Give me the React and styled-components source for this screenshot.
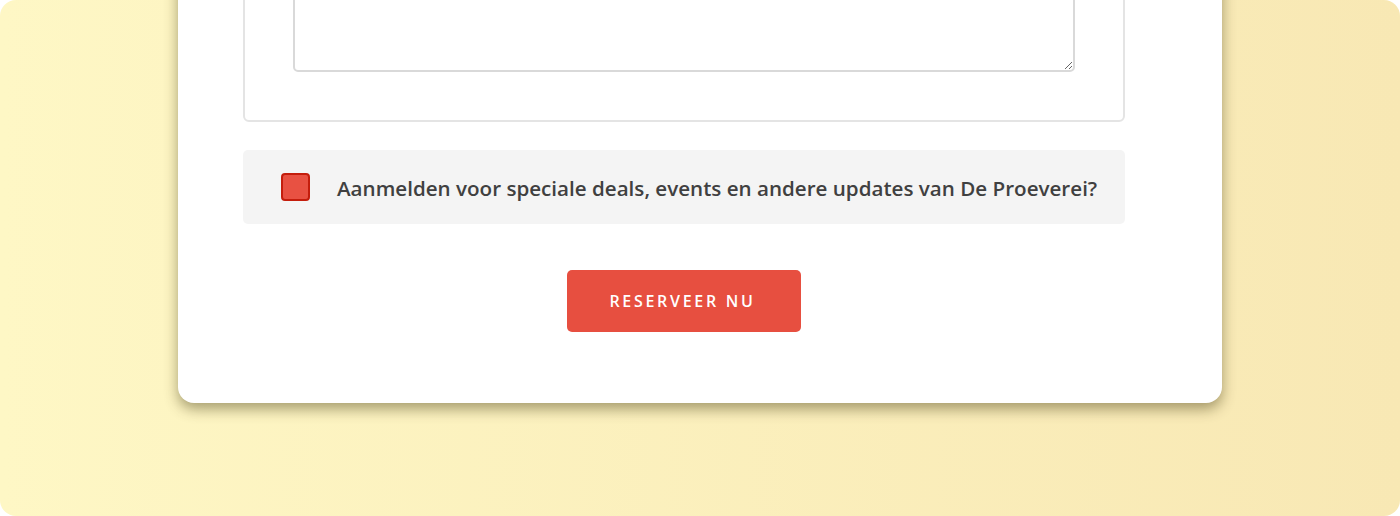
import React from "react";
import styled, { createGlobalStyle } from "styled-components";

const GlobalStyle = createGlobalStyle`
    html, body {
        margin: 0;
        padding: 0;
        background: #ffffff;
    }
    * {
        box-sizing: border-box;
    }
`;

const Stage = styled.div`
    width: 1400px;
    height: 516px;
    border-radius: 16px;
    overflow: hidden;
    background: linear-gradient(90deg, #fef7c5 0%, #f8e8b4 100%);

    display: flex;
    flex-direction: column;
    justify-content: flex-end;
    align-items: center;
    padding-bottom: 113px;
`;

const Card = styled.div`
    width: 1044px;
    flex-shrink: 0;
    background: #ffffff;
    border-radius: 16px;
    box-shadow: 0 6px 14px rgba(60, 50, 10, 0.45);
    padding: 0 97px 71px 65px;

    display: flex;
    flex-direction: column;
    align-items: center;
`;

const Fieldset = styled.div`
    width: 100%;
    border: 2px solid #e4e4e4;
    border-radius: 6px;
    padding: 0 48px 48px;
`;

const TextArea = styled.textarea`
    display: block;
    width: 100%;
    height: 200px;
    border: 2px solid #d9d9d9;
    border-radius: 5px;
    background: #ffffff;
    outline: none;
`;

const OptIn = styled.label`
    width: 100%;
    margin-top: 28px;
    height: 74px;
    background: #f4f4f4;
    border-radius: 5px;
    padding-left: 38px;

    display: flex;
    align-items: center;
    gap: 27px;
    cursor: pointer;
`;

const Box = styled.span`
    width: 29px;
    height: 28px;
    flex-shrink: 0;
    background: #e85142;
    border: 2px solid #c41d0c;
    border-radius: 4px;
`;

const OptInText = styled.span`
    color: #404040;
    font-family: 'Open Sans', sans-serif;
    font-size: 20.6px;
    font-weight: 600;
    padding-top: 2px;
`;

const Button = styled.button`
    margin-top: 46px;
    width: 234px;
    height: 62px;
    border: none;
    border-radius: 5px;
    background: #e74f40;
    color: #ffffff;
    font-family: 'Open Sans', sans-serif;
    font-size: 16px;
    font-weight: 600;
    letter-spacing: 2.7px;
    padding-left: 3px;
    cursor: pointer;
`;

function App() {
    return (
        <>
            <GlobalStyle />
            <Stage>
                <Card>
                    <Fieldset>
                        <TextArea />
                    </Fieldset>
                    <OptIn>
                        <Box />
                        <OptInText>Aanmelden voor speciale deals, events en andere updates van De Proeverei?</OptInText>
                    </OptIn>
                    <Button>RESERVEER NU</Button>
                </Card>
            </Stage>
        </>
    );
}

export default App;
